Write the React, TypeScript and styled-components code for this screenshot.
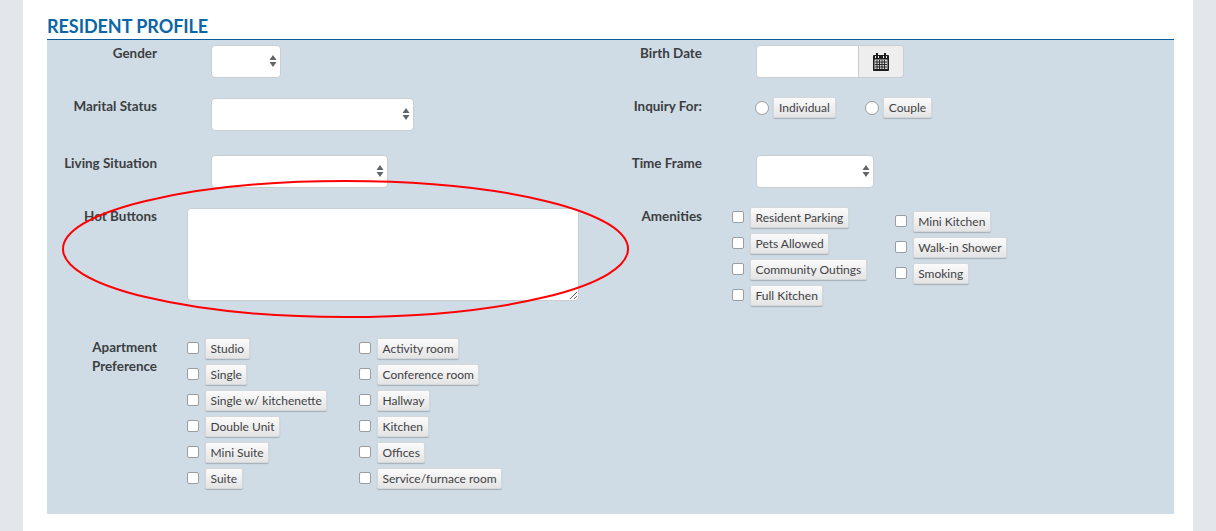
import styled, { createGlobalStyle } from "styled-components";

const GlobalStyle = createGlobalStyle`
  html, body {
    margin: 0;
    padding: 0;
    background: #e3e6eb;
    font-family: Lato, "Liberation Sans", sans-serif;
    color: #3c3f42;
  }
`;

const Page = styled.div`
  position: relative;
  box-sizing: border-box;
  width: 1170px;
  height: 531px;
  margin-left: 23px;
  padding: 15px 19px 0 24px;
  background: #fff;
  overflow: hidden;
`;

const Heading = styled.h2`
  margin: 0;
  height: 24px;
  border-bottom: 1px solid #0b5c9c;
  font-size: 18px;
  line-height: 22px;
  letter-spacing: -0.05px;
  font-weight: 700;
  color: #0b66a8;
  text-transform: uppercase;
`;

const Panel = styled.div`
  display: grid;
  grid-template-columns: 564px 1fr;
  grid-template-rows: 53px 57px 53px 130px 1fr;
  box-sizing: border-box;
  height: 474px;
  padding-top: 5px;
  background: #cfdbe5;
`;

const Field = styled.div<{ $labelWidth?: number }>`
  display: grid;
  grid-template-columns: ${({ $labelWidth = 110 }) => $labelWidth}px 1fr;
  align-items: start;
`;

const Label = styled.label`
  display: block;
  margin-top: -1px;
  font-size: 13.45px;
  line-height: 19px;
  font-weight: 700;
  text-align: right;
  color: #3c3f42;
`;

const TwoLineLabel = styled(Label)`
  margin-top: 0;
`;

const SelectWrap = styled.div<{ $width: number; $ml: number }>`
  position: relative;
  box-sizing: border-box;
  width: ${({ $width }) => $width}px;
  height: 33px;
  margin-left: ${({ $ml }) => $ml}px;
  background: #fff;
  border: 1px solid #c9ced3;
  border-radius: 4px;
`;

const Arrows = styled.svg`
  position: absolute;
  top: 8px;
  right: 3px;
  width: 8px;
  height: 14px;
`;

const SelectBox = ({ width, ml }: { width: number; ml: number }) => (
  <SelectWrap $width={width} $ml={ml}>
    <Arrows viewBox="0 0 8 14">
      <path d="M4 1 L7.5 6 L0.5 6 Z" fill="#626568" />
      <path d="M0.5 8 L7.5 8 L4 13 Z" fill="#626568" />
    </Arrows>
  </SelectWrap>
);

const DateGroup = styled.div`
  display: flex;
  box-sizing: border-box;
  width: 148px;
  height: 33px;
  margin-left: 54px;
  border: 1px solid #c9ced3;
  border-radius: 4px;
  overflow: hidden;
`;

const DateInput = styled.div`
  width: 101px;
  background: #fff;
`;

const DateAddon = styled.div`
  flex: 1;
  display: flex;
  align-items: center;
  justify-content: center;
  background: #eeeeee;
  border-left: 1px solid #c9ced3;
`;

const CalendarIcon = () => (
  <svg width="16" height="18" viewBox="0 0 16 18">
    <rect x="0" y="2" width="16" height="16" rx="1" fill="#1d1d1d" />
    <rect x="3" y="0" width="2" height="4" fill="#1d1d1d" />
    <rect x="11" y="0" width="2" height="4" fill="#1d1d1d" />
    <rect x="2" y="3" width="1" height="2" fill="#eee" />
    <rect x="5" y="3" width="1" height="2" fill="#eee" />
    <rect x="10" y="3" width="1" height="2" fill="#eee" />
    <rect x="13" y="3" width="1" height="2" fill="#eee" />
    <rect x="1.5" y="6.5" width="13" height="9.5" fill="#d8d8d8" />
    <path
      d="M4 7v9M6.5 7v9M9 7v9M11.5 7v9M2 9h12M2 11.5h12M2 14h12"
      stroke="#2a2a2a"
      strokeWidth="1"
      fill="none"
    />
  </svg>
);

const RadioRow = styled.div`
  display: flex;
  align-items: center;
  gap: 29px;
  margin-left: 53px;
  margin-top: -1px;
`;

const Option = styled.div<{ $gap?: number }>`
  display: flex;
  align-items: center;
  gap: ${({ $gap = 6 }) => $gap}px;
`;

const Radio = styled.span`
  box-sizing: border-box;
  width: 14px;
  height: 14px;
  background: #fff;
  border: 1px solid #9a9ea2;
  border-radius: 50%;
`;

const Check = styled.span`
  box-sizing: border-box;
  width: 12px;
  height: 12px;
  margin-bottom: 2px;
  background: #fff;
  border: 1px solid #9a9ea2;
  border-radius: 2px;
`;

const Chip = styled.span<{ $pad?: number }>`
  box-sizing: border-box;
  height: 21px;
  padding: 0 ${({ $pad = 4.5 }) => $pad}px;
  font-size: 12px;
  line-height: 19px;
  color: #3f4245;
  white-space: nowrap;
  background: linear-gradient(#fbfbfb, #e4e4e4);
  border: 1px solid #d5d8db;
  border-radius: 2px;
  box-shadow: 0 1px 1px rgba(0, 0, 0, 0.2);
`;

const Stack = styled.div<{ $top?: number }>`
  display: flex;
  flex-direction: column;
  align-items: flex-start;
  gap: 5px;
  padding-top: ${({ $top = 0 }) => $top}px;
`;

const Columns = styled.div<{ $ml: number; $gap: number; $mt?: number }>`
  display: flex;
  align-items: flex-start;
  gap: ${({ $gap }) => $gap}px;
  margin-left: ${({ $ml }) => $ml}px;
  margin-top: ${({ $mt = 0 }) => $mt}px;
`;

const ColumnA = styled.div`
  width: 172px;
`;

const TextArea = styled.div`
  position: relative;
  box-sizing: border-box;
  width: 392px;
  height: 93px;
  margin-left: 30px;
  background: #fff;
  border: 1px solid #c9ced3;
  border-radius: 4px;
`;

const Grip = styled.svg`
  position: absolute;
  right: 1px;
  bottom: 1px;
  width: 8px;
  height: 8px;
`;

const FullRow = styled.div`
  grid-column: 1 / -1;
`;

const Annotation = styled.svg`
  position: absolute;
  left: 39px;
  top: 180px;
  width: 568px;
  height: 138px;
  pointer-events: none;
`;

const Options = ({ items, top }: { items: string[]; top?: number }) => (
  <Stack $top={top}>
    {items.map((item) => (
      <Option key={item}>
        <Check />
        <Chip>{item}</Chip>
      </Option>
    ))}
  </Stack>
);

export default function App() {
  return (
    <>
      <GlobalStyle />
      <Page>
        <Heading>Resident Profile</Heading>
        <Panel>
          <Field>
            <Label>Gender</Label>
            <SelectBox width={70} ml={54} />
          </Field>
          <Field $labelWidth={91}>
            <Label>Birth Date</Label>
            <DateGroup>
              <DateInput />
              <DateAddon>
                <CalendarIcon />
              </DateAddon>
            </DateGroup>
          </Field>

          <Field>
            <Label>Marital Status</Label>
            <SelectBox width={203} ml={54} />
          </Field>
          <Field $labelWidth={91}>
            <Label>Inquiry For:</Label>
            <RadioRow>
              <Option $gap={4}>
                <Radio />
                <Chip $pad={5}>Individual</Chip>
              </Option>
              <Option $gap={4}>
                <Radio />
                <Chip $pad={5}>Couple</Chip>
              </Option>
            </RadioRow>
          </Field>

          <Field>
            <Label>Living Situation</Label>
            <SelectBox width={177} ml={54} />
          </Field>
          <Field $labelWidth={91}>
            <Label>Time Frame</Label>
            <SelectBox width={118} ml={54} />
          </Field>

          <Field>
            <Label>Hot Buttons</Label>
            <TextArea>
              <Grip viewBox="0 0 8 8">
                <path d="M1 8 L8 1 M5 8 L8 5" stroke="#666" strokeWidth="1" />
              </Grip>
            </TextArea>
          </Field>
          <Field $labelWidth={91}>
            <Label>Amenities</Label>
            <Columns $ml={30} $gap={28} $mt={-1}>
              <Options
                items={[
                  "Resident Parking",
                  "Pets Allowed",
                  "Community Outings",
                  "Full Kitchen",
                ]}
              />
              <Options
                top={4}
                items={["Mini Kitchen", "Walk-in Shower", "Smoking"]}
              />
            </Columns>
          </Field>

          <FullRow>
            <Field>
              <TwoLineLabel>
                Apartment
                <br />
                Preference
              </TwoLineLabel>
              <Columns $ml={30} $gap={0}>
                <ColumnA>
                  <Options
                    items={[
                      "Studio",
                      "Single",
                      "Single w/ kitchenette",
                      "Double Unit",
                      "Mini Suite",
                      "Suite",
                    ]}
                  />
                </ColumnA>
                <Options
                  items={[
                    "Activity room",
                    "Conference room",
                    "Hallway",
                    "Kitchen",
                    "Offices",
                    "Service/furnace room",
                  ]}
                />
              </Columns>
            </Field>
          </FullRow>
        </Panel>
        <Annotation viewBox="0 0 568 138">
          <ellipse
            cx="283.5"
            cy="69"
            rx="282.5"
            ry="68"
            fill="none"
            stroke="#ff0000"
            strokeWidth="2"
          />
        </Annotation>
      </Page>
    </>
  );
}
